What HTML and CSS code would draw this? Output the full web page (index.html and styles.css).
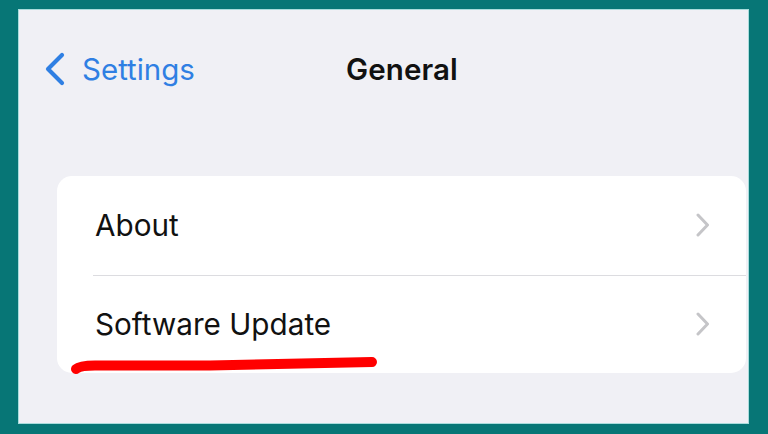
FILE: index.html
```html
<!DOCTYPE html>
<html lang="en">
<head>
<meta charset="utf-8">
<title>General</title>
<link rel="stylesheet" href="styles.css">
</head>
<body>
<div class="frame">
  <div class="screen">
    <header class="nav">
      <a class="back" href="#">
        <svg class="back-icon" width="22" height="34" viewBox="0 0 22 34"><path d="M18 3 L4 17 L18 31" fill="none" stroke="#2f7fe3" stroke-width="4.2" stroke-linecap="round" stroke-linejoin="round"/></svg>
        <span>Settings</span>
      </a>
      <h1 class="title">General</h1>
      <span class="spacer"></span>
    </header>
    <ul class="card">
      <li class="row"><span class="label">About</span><svg class="chev" width="15" height="24" viewBox="0 0 15 24"><path d="M3 2 L12.5 12 L3 22" fill="none" stroke="#c5c5c8" stroke-width="3" stroke-linecap="round" stroke-linejoin="round"/></svg></li>
      <li class="row"><span class="label">Software Update</span><svg class="chev" width="15" height="24" viewBox="0 0 15 24"><path d="M3 2 L12.5 12 L3 22" fill="none" stroke="#c5c5c8" stroke-width="3" stroke-linecap="round" stroke-linejoin="round"/></svg></li>
    </ul>
  </div>
  <svg class="mark" width="768" height="434" viewBox="0 0 768 434"><path d="M76 369 Q80 365.5 95 365.5 L210 365.5 Q300 363.5 372 362" fill="none" stroke="#ff0000" stroke-width="10" stroke-linecap="round" stroke-linejoin="round"/></svg>
</div>
</body>
</html>
```
FILE: styles.css
```css
* { box-sizing: border-box; }
html, body { margin: 0; padding: 0; }
body {
  width: 768px;
  height: 434px;
  background: #077676;
  font-family: Inter, "Noto Sans", "Liberation Sans", sans-serif;
  overflow: hidden;
}
.frame {
  position: relative;
  width: 768px;
  height: 434px;
  padding: 10px 20px 11px 19px;
  display: flex;
}
.screen {
  flex: 1;
  background: #f0f0f5;
  box-shadow: 0 0 0 1px #a9dcdc;
  display: flex;
  flex-direction: column;
}
.nav {
  display: grid;
  grid-template-columns: 1fr auto 1fr;
  align-items: center;
  height: 40px;
  margin-top: 39px;
  padding-left: 25px;
}
.back {
  display: flex;
  align-items: center;
  gap: 16px;
  color: #2f7fe3;
  text-decoration: none;
  font-size: 29.5px;
}
.back-icon { display: block; }
.title {
  margin: 0 0 0 12px;
  font-size: 29.5px;
  font-weight: 600;
  color: #111;
  letter-spacing: 0.1px;
}
.card {
  list-style: none;
  margin: 87px 2px 0 38px;
  padding: 0;
  background: #fff;
  border-radius: 15px;
  overflow: hidden;
}
.row {
  height: 98.5px;
  display: flex;
  align-items: center;
  justify-content: space-between;
  margin-left: 36px;
  padding: 0 36px 0 2px;
  font-size: 29.7px;
  color: #111;
}
.row + .row { border-top: 1px solid #dcdce0; }
.chev { display: block; }
.mark {
  position: absolute;
  left: 0;
  top: 0;
  pointer-events: none;
}
```
